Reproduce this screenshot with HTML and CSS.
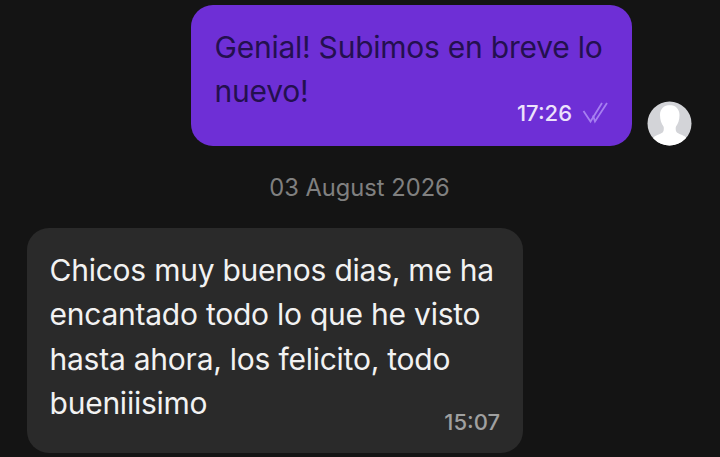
FILE: index.html
```html
<!DOCTYPE html>
<html lang="es">
<head>
<meta charset="utf-8">
<title>Chat</title>
<link rel="stylesheet" href="styles.css">
</head>
<body>
<main class="chat">
  <div class="row row-out">
    <div class="bubble bubble-out">
      <p class="text">Genial! Subimos en breve lo nuevo!</p>
      <div class="meta">
        <span class="time">17:26</span>
        <svg class="ticks" width="26" height="22" viewBox="0 0 26 22" fill="none" stroke="#a67ff0" stroke-width="1.8">
          <path d="M1.500 9 L8.500 19.500 L20 1"/>
          <path d="M11 13.500 L13 19.500 L25 1"/>
        </svg>
      </div>
    </div>
    <svg class="avatar" width="45" height="45" viewBox="0 0 45 45">
      <defs><clipPath id="circle"><circle cx="22.5" cy="22.5" r="22"/></clipPath></defs>
      <circle cx="22.5" cy="22.5" r="22" fill="#d3d4d8"/>
      <path clip-path="url(#circle)" fill="#fff" d="M22.500 4c6 0 10 4 10 10 0 5-1.500 9-3.500 11.500-.5 1-.5 4 .5 5.500 1.500 2 7 3 9 5 1.500 1.500 2 4 2 9H5c0-5 .5-7.500 2-9 2-2 7.500-3 9-5 1-1.500 1-4.500.5-5.500-2-2.500-3.500-6.500-3.500-11.500 0-6 4-10 10-10z"/>
    </svg>
  </div>
  <div class="date">03 August 2026</div>
  <div class="bubble bubble-in">
    <p class="text">Chicos muy buenos dias, me ha encantado todo lo que he visto hasta ahora, los felicito, todo bueniiisimo</p>
    <div class="meta"><span class="time">15:07</span></div>
  </div>
</main>
</body>
</html>
```
FILE: styles.css
```css
* { box-sizing: border-box; }
html, body { margin: 0; height: 100%; }
body {
  background: #141414;
  font-family: Inter, "Liberation Sans", sans-serif;
  overflow: hidden;
}
.chat {
  display: flex;
  flex-direction: column;
  padding: 5px 0 0 27px;
}
.row-out {
  display: flex;
  align-items: flex-end;
  justify-content: flex-end;
  gap: 15px;
  padding-right: 28px;
}
.bubble {
  display: grid;
  border-radius: 22px;
}
.bubble > * { grid-area: 1 / 1; }
.text {
  margin: 0;
  font-size: 30px;
  line-height: 44.500px;
  letter-spacing: -0.24px;
}
.meta {
  display: flex;
  align-items: center;
  gap: 10px;
  align-self: end;
  justify-self: end;
}
.time {
  font-size: 22px;
  font-weight: 500;
  line-height: 24px;
}
.bubble-out {
  width: 441px;
  height: 141px;
  padding: 20px 24px 21px 23.500px;
  background: #6e2fd6;
  color: #24104f;
}
.bubble-out .text { line-height: 44px; }
.bubble-out .time { color: #ece2fb; }
.ticks { display: block; }
.avatar { display: block; }
.date {
  width: 665px;
  margin-top: 28px;
  text-align: center;
  font-size: 23.700px;
  line-height: 28px;
  color: #808080;
}
.bubble-in {
  width: 496px;
  height: 225px;
  margin-top: 26px;
  padding: 19.500px 23px 19px 22.500px;
  background: #2a2a2a;
  color: #f2f2f2;
}
.bubble-in .time { color: #a0a0a0; }
```
